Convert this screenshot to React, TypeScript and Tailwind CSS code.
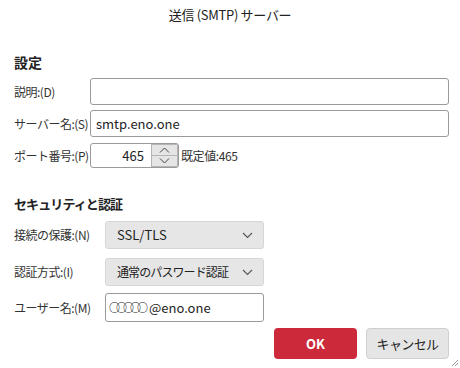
const font = { fontFamily: '"Noto Sans CJK JP", "Noto Sans", sans-serif' };

const Chevron = () => (
  <svg width="11" height="7" viewBox="0 0 11 7" className="text-[#555]">
    <path d="M1 1l4.5 4.5L10 1" fill="none" stroke="currentColor" strokeWidth="1.1" />
  </svg>
);

const Label = ({ text, w }: { text: string; w: string }) => (
  <span className={`${w} shrink-0 whitespace-nowrap text-[12px] tracking-[-0.5px] text-[#333]`}>{text}</span>
);

const Select = ({ value, tight }: { value: string; tight?: boolean }) => (
  <div className="flex h-[28px] w-[159px] shrink-0 items-center justify-between rounded-[3px] border border-[#d6d6d6] bg-[#e6e6e6] pl-[11px] pr-[10px] text-[#222]">
    <span className={tight ? 'whitespace-nowrap text-[12px] tracking-[-0.9px]' : 'whitespace-nowrap text-[13px]'}>
      {value}
    </span>
    <Chevron />
  </div>
);

const App = () => {
  return (
    <div
      className="relative flex h-[368px] w-[460px] flex-col overflow-hidden bg-white text-[#222]"
      style={font}
    >
      <div className="flex h-[30px] items-center justify-center text-[13px] tracking-[-0.3px]">
        送信 (SMTP) サーバー
      </div>

      <div className="flex flex-col pl-[14px]">
        <h2 className="mt-[22px] h-[20px] text-[14px] font-bold leading-[20px]">設定</h2>

        <div className="mt-[6px] flex h-[27px] items-center">
          <Label text="説明:(D)" w="w-[76px]" />
          <div className="h-[27px] w-[359px] shrink-0 rounded-[3px] border border-[#9a9a9a] bg-white" />
        </div>

        <div className="mt-[5px] flex h-[27px] items-center">
          <Label text="サーバー名:(S)" w="w-[76px]" />
          <div className="flex h-[27px] w-[359px] shrink-0 items-center rounded-[3px] border border-[#9a9a9a] bg-white px-[5px] text-[13px]">
            smtp.eno.one
          </div>
        </div>

        <div className="mt-[6px] flex h-[25px] items-center">
          <Label text="ポート番号:(P)" w="w-[76px]" />
          <div className="flex h-[25px] w-[89px] shrink-0 rounded-[3px] border border-[#9a9a9a] bg-white">
            <div className="flex w-[60px] items-center justify-end pr-[7px] text-[13px]">465</div>
            <div className="flex w-[27px] flex-col">
              <div className="flex flex-1 items-center justify-center border border-[#b5b5b5] bg-[#e5e5e5]">
                <svg width="11" height="6" viewBox="0 0 11 6">
                  <path d="M1 5.5L5.5 1 10 5.5" fill="none" stroke="#444" strokeWidth="1" />
                </svg>
              </div>
              <div className="flex flex-1 items-center justify-center border border-t-0 border-[#b5b5b5] bg-[#e5e5e5]">
                <svg width="11" height="6" viewBox="0 0 11 6">
                  <path d="M1 0.5L5.5 5 10 0.5" fill="none" stroke="#444" strokeWidth="1" />
                </svg>
              </div>
            </div>
          </div>
          <span className="ml-[2px] whitespace-nowrap text-[12px] tracking-[-0.4px] text-[#333]">既定値:465</span>
        </div>

        <h2 className="mt-[26px] h-[20px] text-[13px] font-bold leading-[20px] tracking-[-0.9px]">
          セキュリティと認証
        </h2>

        <div className="mt-[7px] flex items-center">
          <Label text="接続の保護:(N)" w="w-[91px]" />
          <Select value="SSL/TLS" />
        </div>

        <div className="mt-[9px] flex items-center">
          <Label text="認証方式:(I)" w="w-[91px]" />
          <Select value="通常のパスワード認証" tight />
        </div>

        <div className="mt-[7px] flex items-center">
          <Label text="ユーザー名:(M)" w="w-[91px]" />
          <div className="flex h-[29px] w-[159px] shrink-0 items-center whitespace-nowrap rounded-[3px] border border-[#9a9a9a] bg-white px-[3px] text-[13px]">
            <span className="text-[11px] font-bold tracking-[-4px] text-[#222]">○○○○○</span>
            <span className="ml-[5px]">@eno.one</span>
          </div>
        </div>
      </div>

      <div className="mt-[6px] flex justify-end gap-[9px] pr-[11px]">
        <button className="h-[31px] w-[83px] rounded-[4px] bg-[#cc2a3a] text-[13px] font-bold text-white">
          OK
        </button>
        <button className="h-[31px] w-[83px] rounded-[4px] border border-[#cfcfcf] bg-[#e5e5e5] text-[13px] tracking-[-0.6px] text-[#222]">
          キャンセル
        </button>
      </div>

      <svg
        className="absolute bottom-[1px] right-[1px]"
        width="8"
        height="8"
        viewBox="0 0 8 8"
      >
        <path d="M7 1L1 7M7 4L4 7" stroke="#999" strokeWidth="1" />
      </svg>
    </div>
  );
};

export default App;
